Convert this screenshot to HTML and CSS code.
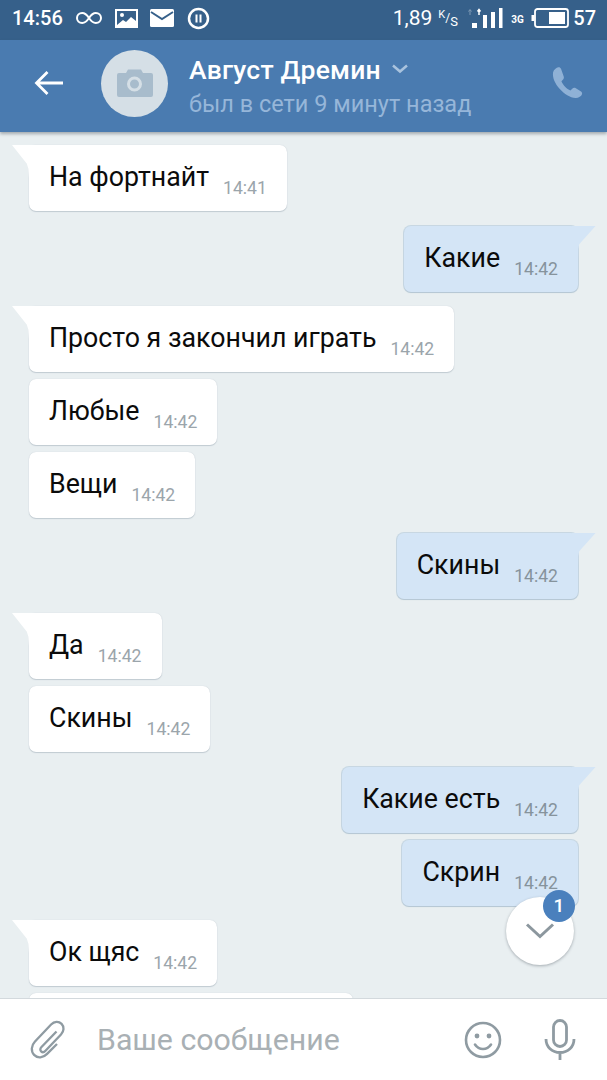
FILE: index.html
```html
<!DOCTYPE html>
<html lang="ru">
<head>
<meta charset="utf-8">
<title>Август Дремин</title>
<link rel="stylesheet" href="styles.css">
</head>
<body>
<div class="app">
  <div class="statusbar">
    <div class="st-left">
      <span class="st-time">14:56</span>
      <svg class="ic-inf" width="28" height="14" viewBox="0 0 28 14"><path d="M14 7C11.500 3.200 9.600 2 7.200 2 4.200 2 2 4.200 2 7s2.200 5 5.200 5c2.400 0 4.300-1.200 6.800-5 2.500-3.800 4.400-5 6.800-5 3 0 5.200 2.200 5.200 5s-2.200 5-5.200 5c-2.400 0-4.300-1.200-6.800-5z" fill="none" stroke="#fff" stroke-width="2"/></svg>
      <svg class="ic-pic" width="23" height="19" viewBox="0 0 23 19"><path d="M0 0h23v19H0z" fill="#fff"/><path d="M2 2h19v10l-5-4-5 5-3-2-6 5z" fill="#36608a"/><circle cx="7" cy="6" r="2" fill="#fff"/></svg>
      <svg class="ic-mail" width="24" height="18" viewBox="0 0 24 18"><rect width="24" height="18" rx="1.500" fill="#fff"/><path d="M1 3l11 7 11-7" fill="none" stroke="#36608a" stroke-width="2"/></svg>
      <svg class="ic-pause" width="23" height="23" viewBox="0 0 23 23"><circle cx="11.500" cy="11.500" r="9.500" fill="none" stroke="#fff" stroke-width="2.500"/><path d="M8.500 7.500h2v8h-2zM12.500 7.500h2v8h-2z" fill="#fff"/></svg>
    </div>
    <div class="st-right">
      <span class="st-speed">1,89</span>
      <span class="st-unit"><sup>K</sup>/<sub>S</sub></span>
      <svg class="ic-signal" width="37" height="22" viewBox="0 0 37 22"><path d="M4 8V3M2.500 4.500L4 2.500l1.500 2" fill="none" stroke="#7f9ab5" stroke-width="1"/><path d="M13 8V3M11.500 4.500L13 2.500l1.500 2" fill="none" stroke="#fff" stroke-width="1.500"/><path d="M6 16h5v5H6zM17 8h4v13h-4zM25 5h4v16h-4zM33 1h3.500v20H33z" fill="#fff"/></svg>
      <span class="st-3g">3G</span>
      <svg class="ic-batt" width="38" height="20" viewBox="0 0 38 20"><rect x="4" y="1" width="33" height="18" rx="2.500" fill="none" stroke="#fff" stroke-width="1.800"/><path d="M0.500 7h3v6h-3z" fill="#fff"/><rect x="18" y="4" width="16" height="12" fill="#fff"/></svg>
      <span class="st-batt">57</span>
    </div>
  </div>

  <header class="header">
    <svg class="back" width="30" height="26" viewBox="0 0 30 26"><path d="M29 13H3M13.500 2L2.500 13l11 11" fill="none" stroke="#fff" stroke-width="2.800"/></svg>
    <div class="avatar">
      <svg width="36" height="28" viewBox="0 0 36 28"><path d="M2 4h7l2-3.500h13l2 3.500h8a2 2 0 0 1 2 2v20a2 2 0 0 1-2 2H2a2 2 0 0 1-2-2V6a2 2 0 0 1 2-2z" fill="#a8bccc"/><circle cx="17.500" cy="15" r="6" fill="none" stroke="#d5dfe6" stroke-width="3"/></svg>
    </div>
    <div class="who">
      <div class="name-row">
        <span class="name">Август Дремин</span>
        <svg width="18" height="10" viewBox="0 0 18 10"><path d="M2 1.500l7 6 7-6" fill="none" stroke="#a9c3de" stroke-width="2.500"/></svg>
      </div>
      <div class="seen">был в сети 9 минут назад</div>
    </div>
    <svg class="phone" width="36" height="36" viewBox="0 0 24 24"><path d="M6.200 1.500c-1.200.3-3.200 1.500-3.500 3.500-.5 3.500 1.300 7.500 4.500 11 3 3.200 6.800 5.800 10.500 6 2 .1 3.800-1.200 4.300-2.500.3-.8-.2-1.500-.9-2l-3.200-2c-.9-.5-1.700-.4-2.400.3l-1.200 1.200c-2.500-1-5-3.700-6-6.200l1.100-1.200c.6-.7.700-1.400.3-2.300L8 2.500c-.4-.8-1-1.200-1.800-1z" fill="#8fb1d6"/></svg>
  </header>

  <main class="chat">
    <div class="group in">
      <div class="msg"><span class="txt">На фортнайт</span><span class="tm">14:41</span></div>
    </div>
    <div class="group out">
      <div class="msg"><span class="txt">Какие</span><span class="tm">14:42</span></div>
    </div>
    <div class="group in">
      <div class="msg"><span class="txt">Просто я закончил играть</span><span class="tm">14:42</span></div>
      <div class="msg"><span class="txt">Любые</span><span class="tm">14:42</span></div>
      <div class="msg"><span class="txt">Вещи</span><span class="tm">14:42</span></div>
    </div>
    <div class="group out">
      <div class="msg"><span class="txt">Скины</span><span class="tm">14:42</span></div>
    </div>
    <div class="group in">
      <div class="msg"><span class="txt">Да</span><span class="tm">14:42</span></div>
      <div class="msg"><span class="txt">Скины</span><span class="tm">14:42</span></div>
    </div>
    <div class="group out">
      <div class="msg"><span class="txt">Какие есть</span><span class="tm">14:42</span></div>
      <div class="msg"><span class="txt">Скрин</span><span class="tm">14:42</span></div>
    </div>
    <div class="group in">
      <div class="msg"><span class="txt">Ок щяс</span><span class="tm">14:42</span></div>
      <div class="msg clipped"></div>
    </div>
    <button class="fab">
      <svg width="30" height="18" viewBox="0 0 30 18"><path d="M2 2.500l13 12 13-12" fill="none" stroke="#8c979e" stroke-width="3"/></svg>
      <span class="badge">1</span>
    </button>
  </main>

  <footer class="composer">
    <svg class="clip" width="36" height="42" viewBox="0 0 36 42"><path d="M26.500 12.500L11.500 28c-1.500 1.600-1.500 3.400-.4 4.400 1.200 1.100 2.900 1 4.400-.6L31 15.500c3-3.200 3.400-7.700.6-10.600-2.900-3-7.300-2.700-10.500.6L5 22.500c-3.800 4-4.300 9.800-.9 13.400 3.500 3.700 9 3.200 13-1L27 25" fill="none" stroke="#8f9ba2" stroke-width="2.300"/></svg>
    <span class="placeholder">Ваше сообщение</span>
    <svg class="smile" width="38" height="38" viewBox="0 0 38 38"><circle cx="19" cy="19" r="17" fill="none" stroke="#8f9ba2" stroke-width="2.600"/><circle cx="13" cy="15" r="2.400" fill="#8f9ba2"/><circle cx="25" cy="15" r="2.400" fill="#8f9ba2"/><path d="M11 23.500c2 3 5 4.500 8 4.500s6-1.500 8-4.500" fill="none" stroke="#8f9ba2" stroke-width="2.600" stroke-linecap="round"/></svg>
    <svg class="mic" width="32" height="42" viewBox="0 0 32 42"><rect x="9.500" y="1.500" width="13" height="26" rx="6.500" fill="none" stroke="#8f9ba2" stroke-width="2.800"/><path d="M2 20c0 8 6 13.500 14 13.500S30 28 30 20M16 33.500V41" fill="none" stroke="#8f9ba2" stroke-width="2.800"/></svg>
  </footer>
</div>
</body>
</html>
```
FILE: styles.css
```css
* { box-sizing: border-box; }
html, body { margin: 0; padding: 0; }
body { font-family: Roboto, "Noto Sans", sans-serif; background: #e9eff1; }
.app { width: 607px; height: 1080px; display: flex; flex-direction: column; overflow: hidden; }

.statusbar { height: 40px; flex: none; background: #36608a; color: #fff; display: flex; justify-content: space-between; align-items: center; padding: 0 11px 4px 12px; }
.st-left, .st-right { display: flex; align-items: center; }
.st-time { font-size: 20px; font-weight: 500; width: 50px; margin-right: 13px; white-space: nowrap; }
.ic-inf { margin-right: 12px; }
.ic-pic { margin-right: 12px; }
.ic-mail { margin-right: 13px; }
.st-speed { font-size: 21px; margin-right: 6px; }
.st-unit { font-size: 12px; width: 20px; display: inline-flex; align-items: center; margin-right: 8px; line-height: 1; }
.st-unit sup { position: relative; top: -4px; vertical-align: baseline; font-size: 11px; }
.st-unit sub { position: relative; top: 3px; vertical-align: baseline; font-size: 13px; }
.ic-signal { margin-right: 8px; }
.st-3g { font-size: 10px; font-weight: 700; width: 13px; align-self: flex-end; margin-right: 7px; margin-bottom: 5px; }
.ic-batt { margin-right: 4px; }
.st-batt { font-size: 20px; font-weight: 500; }

.header { height: 92px; flex: none; background: #4a7bb0; display: flex; align-items: center; padding: 0 22px 6px 34px; box-shadow: 0 2px 3px rgba(60,70,80,.4); position: relative; z-index: 2; }
.back { margin-right: 37px; }
.avatar { width: 67px; height: 67px; border-radius: 50%; background: #d5dfe6; display: flex; align-items: center; justify-content: center; margin-right: 21px; }
.who { flex: 1; padding-top: 4px; }
.name-row { display: flex; align-items: center; gap: 10px; height: 36px; }
.name { color: #fff; font-size: 26.500px; font-weight: 500; letter-spacing: .2px; }
.seen { color: #96b6d9; font-size: 23.500px; line-height: 30px; margin-top: 2px; }

.chat { flex: 1; min-height: 0; position: relative; overflow: hidden; padding-top: 13px; background: #e9eff1; display: flex; flex-direction: column; gap: 14.500px; }
.group { display: flex; flex-direction: column; gap: 7px; }
.group.in { align-items: flex-start; padding-left: 29px; }
.group.out { align-items: flex-end; padding-right: 29px; }
.msg { position: relative; height: 66px; flex: none; border-radius: 7px; padding: 0 20px; display: flex; box-shadow: 0 1px 1px rgba(110,130,145,.3), 0 0 1px rgba(110,130,145,.3); }
.in .msg { background: #fff; }
.out .msg { background: #d4e5f6; box-shadow: 0 0 0 1px rgba(150,180,205,.4), 0 1px 1px rgba(110,130,145,.25); }
.in .msg:first-child::before { content: ""; position: absolute; left: -17px; top: 0; width: 24px; height: 34px; background: #fff; clip-path: polygon(0 0, 100% 0, 100% 100%, 71% 100%, 68% 70%, 62% 55%); }
.out .msg:first-child::before { content: ""; position: absolute; right: -18px; top: 0; width: 24px; height: 34px; background: #d4e5f6; clip-path: polygon(0 0, 100% 0, 30% 55%, 26% 70%, 25% 100%, 0 100%); }
.txt { font-size: 26.750px; color: #0b0b0b; line-height: 30px; margin-top: 17px; white-space: nowrap; }
.tm { font-size: 17.600px; color: #9ba5ab; line-height: 20px; margin-top: 33px; margin-left: 14px; white-space: nowrap; }
.out .tm { color: #86939c; }
.clipped { width: 324px; }

.fab { position: absolute; left: 506px; top: 765px; width: 68px; height: 68px; padding: 0; border: 0; border-radius: 50%; background: #fff; box-shadow: 0 1px 3px rgba(60,70,80,.4); display: flex; align-items: center; justify-content: center; }
.badge { position: absolute; left: 37px; top: -7px; width: 32px; height: 32px; border-radius: 50%; background: #4a80bd; color: #fff; font-family: Roboto, sans-serif; font-size: 19px; font-weight: 500; line-height: 32px; text-align: center; }

.composer { height: 82px; flex: none; background: #fff; border-top: 1px solid #d3d9dd; display: flex; align-items: center; padding: 0 31px 0 30px; position: relative; z-index: 2; }
.clip { margin-right: 31px; }
.placeholder { flex: 1; font-size: 30.300px; color: #a9b0b4; white-space: nowrap; }
.smile { margin-right: 42px; }
```
